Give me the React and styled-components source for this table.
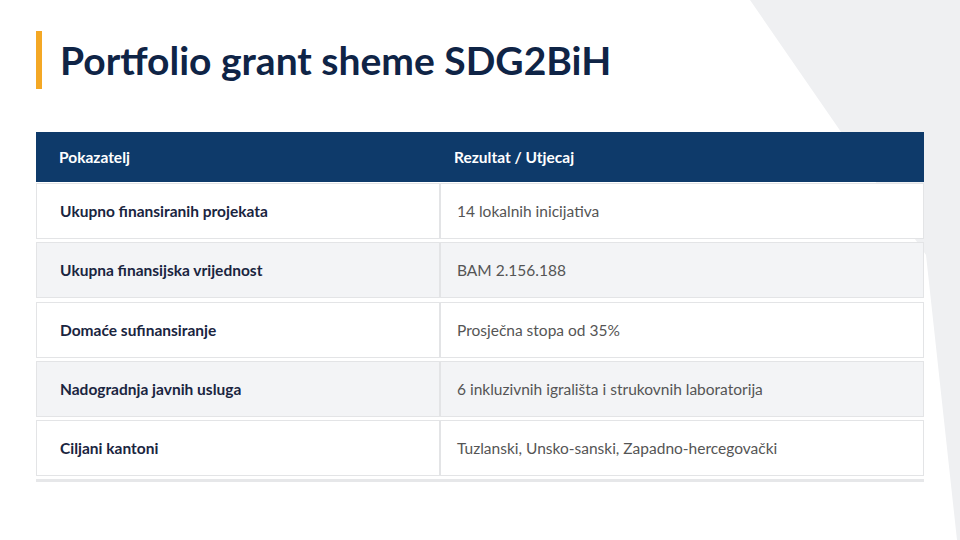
import React from 'react';
import styled, { createGlobalStyle } from 'styled-components';

const GlobalStyle = createGlobalStyle`
    html, body {
        margin: 0;
        padding: 0;
        background: #ffffff;
    }
    body {
        font-family: Lato, "Open Sans", sans-serif;
    }
`;

const Slide = styled.div`
    position: relative;
    width: 960px;
    height: 540px;
    overflow: hidden;
    background: #ffffff;
`;

// decorative grey chevron in the top right corner
const Backdrop = styled.svg`
    position: absolute;
    top: 0;
    left: 0;
    z-index: 0;
`;

const Content = styled.div`
    position: relative;
    z-index: 1;
    padding: 31px 36px 0 36px;
    display: flex;
    flex-direction: column;
    gap: 43px;
`;

const TitleRow = styled.div`
    display: flex;
    align-items: center;
    gap: 18px;
    height: 58px;
`;

const Accent = styled.div`
    width: 6px;
    align-self: stretch;
    background: #f4a825;
`;

const Title = styled.h1`
    margin: 0;
    font-family: Lato, "Open Sans", sans-serif;
    font-weight: 700;
    font-size: 39px;
    color: #0f2446;
`;

const Table = styled.div`
    width: 888px;
    display: flex;
    flex-direction: column;
    border-bottom: 3px solid #e6e7e9;
    padding-bottom: 3px;
`;

const Row = styled.div`
    display: grid;
    grid-template-columns: 402px 1fr;
    height: ${p => (p.$head ? '50px' : '56px')};
    background: ${p => (p.$head ? '#0e3a6a' : p.$alt ? '#f3f4f6' : '#ffffff')};
    border: ${p => (p.$head ? 'none' : '1px solid #e3e4e6')};
    margin-top: ${p => (p.$head ? '0' : p.$first ? '1px' : '3.25px')};
    box-sizing: border-box;
`;

const Cell = styled.div`
    display: flex;
    align-items: center;
    padding-left: ${p => (p.$right ? '16px' : '23px')};
    font-size: 15.5px;
    font-weight: ${p => (p.$bold ? 700 : 400)};
    color: ${p => (p.$head ? '#ffffff' : p.$bold ? '#1a2540' : '#555555')};
    border-left: ${p => (p.$right && !p.$head ? '2px solid #e3e4e6' : 'none')};
`;

const rows = [
    ['Ukupno finansiranih projekata', '14 lokalnih inicijativa'],
    ['Ukupna finansijska vrijednost', 'BAM 2.156.188'],
    ['Domaće sufinansiranje', 'Prosječna stopa od 35%'],
    ['Nadogradnja javnih usluga', '6 inkluzivnih igrališta i strukovnih laboratorija'],
    ['Ciljani kantoni', 'Tuzlanski, Unsko-sanski, Zapadno-hercegovački'],
];

const App = () => (
    <Slide>
        <GlobalStyle />
        <Backdrop width="960" height="540" viewBox="0 0 960 540">
            <polygon points="750,0 960,0 960,540 957,540 926,255" fill="#eff0f2" />
        </Backdrop>
        <Content>
            <TitleRow>
                <Accent />
                <Title>Portfolio grant sheme SDG2BiH</Title>
            </TitleRow>
            <Table>
                <Row $head>
                    <Cell $head $bold>Pokazatelj</Cell>
                    <Cell $head $bold $right>Rezultat / Utjecaj</Cell>
                </Row>
                {rows.map(([label, value], i) => (
                    <Row key={label} $alt={i % 2 === 1} $first={i === 0}>
                        <Cell $bold>{label}</Cell>
                        <Cell $right>{value}</Cell>
                    </Row>
                ))}
            </Table>
        </Content>
    </Slide>
);

export default App;
